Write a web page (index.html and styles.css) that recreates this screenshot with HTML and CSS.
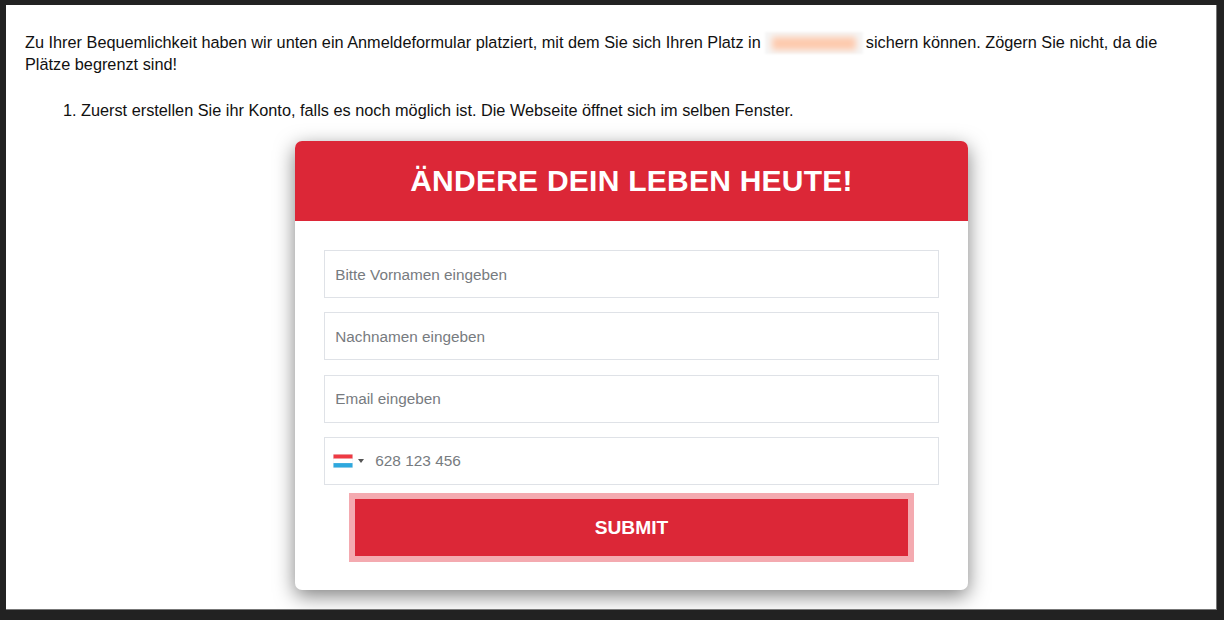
FILE: index.html
```html
<!DOCTYPE html>
<html lang="de">
<head>
    <meta charset="UTF-8">
    <meta name="viewport" content="width=device-width, initial-scale=1.0">
    <title>Anmeldung</title>
    <link rel="stylesheet" href="styles.css">
</head>
<body>

    <div class="page">
        <p class="intro">Zu Ihrer Bequemlichkeit haben wir unten ein Anmeldeformular platziert, mit dem Sie sich Ihren Platz in <span class="redacted"><span class="redacted-bar"></span></span> sichern können. Zögern Sie nicht, da die Plätze begrenzt sind!</p>

        <ol class="steps">
            <li>
                Zuerst erstellen Sie ihr Konto, falls es noch möglich ist. Die Webseite öffnet sich im selben Fenster.
                <div class="card">
                    <h2 class="card-title">ÄNDERE DEIN LEBEN HEUTE!</h2>
                    <form class="signup">
                        <input class="field" type="text" placeholder="Bitte Vornamen eingeben">
                        <input class="field" type="text" placeholder="Nachnamen eingeben">
                        <input class="field" type="email" placeholder="Email eingeben">
                        <div class="field phone">
                            <svg class="flag" width="20" height="14" viewBox="0 0 20 14">
                                <rect width="20" height="14" fill="#eef0f2"/>
                                <rect x="0.5" y="0.5" width="19" height="4.2" fill="#ee3a43"/>
                                <rect x="0.5" y="4.7" width="19" height="4.4" fill="#ffffff"/>
                                <rect x="0.5" y="9.1" width="19" height="4.4" fill="#2ea8de"/>
                            </svg>
                            <span class="caret"></span>
                            <input class="phone-input" type="tel" placeholder="628 123 456">
                        </div>
                        <button class="submit" type="submit">SUBMIT</button>
                    </form>
                </div>
            </li>
        </ol>
    </div>

</body>
</html>
```

FILE: styles.css
```css
html, body {
    height: 100%;
}

body {
    margin: 0;
    padding: 5px 7px 10px 6px;
    box-sizing: border-box;
    background-color: #222;
    font-family: "Liberation Sans", Arial, sans-serif;
    font-size: 16.3px;
    color: #111;
    overflow: hidden;
}

.page {
    height: 100%;
    box-sizing: border-box;
    padding: 27px 17px 0 19px;
    background-color: white;
    border-right: 1px solid #777;
    border-bottom: 1px solid #777;
    overflow: hidden;
}

.intro {
    margin: 0;
    line-height: 21px;
}

.redacted {
    display: inline-block;
    width: 98px;
    height: 22px;
    margin-right: -2px;
    vertical-align: -6px;
    background-color: #f6f6f6;
    overflow: hidden;
    filter: blur(1px);
}

.redacted-bar {
    display: block;
    width: 84px;
    height: 13px;
    margin: 5px auto 0;
    background-color: #fdc9ac;
    filter: blur(3px);
}

.steps {
    margin: 25px 17px 0 0;
    padding-left: 56px;
    line-height: 21px;
}

.card {
    width: 672.5px;
    margin: 20px auto 0;
    background-color: white;
    border-radius: 7px;
    box-shadow: 0 6px 20px rgba(0, 0, 0, 0.5);
}

.card-title {
    margin: 0;
    height: 80px;
    line-height: 79px;
    text-align: center;
    font-size: 30px;
    letter-spacing: 0.25px;
    color: white;
    background-color: #dc2737;
    border-radius: 7px 7px 0 0;
}

.signup {
    padding: 29px 29px 28px;
    display: flex;
    flex-direction: column;
    align-items: center;
}

.field {
    width: 100%;
    height: 48px;
    box-sizing: border-box;
    margin-bottom: 14.4px;
    padding: 1px 10px 0;
    font-family: inherit;
    font-size: 15.3px;
    background-color: white;
    border: 1px solid #dfe2e7;
}

.field::placeholder, .phone-input::placeholder {
    color: #777b80;
    opacity: 1;
}

.phone {
    display: flex;
    align-items: center;
    margin-bottom: 8px;
    padding: 0 8px;
}

.flag {
    flex: none;
}

.caret {
    margin-left: 5px;
    border-left: 3px solid transparent;
    border-right: 3px solid transparent;
    border-top: 4px solid #555;
}

.phone-input {
    flex: 1;
    min-width: 0;
    margin-left: 11px;
    padding: 0;
    border: none;
    font-family: inherit;
    font-size: 15.4px;
}

.submit {
    width: 565px;
    height: 69px;
    box-sizing: border-box;
    font-family: inherit;
    font-size: 19.2px;
    font-weight: bold;
    color: white;
    background-color: #dc2737;
    border: 6px solid #f4aab0;
    cursor: pointer;
}
```
